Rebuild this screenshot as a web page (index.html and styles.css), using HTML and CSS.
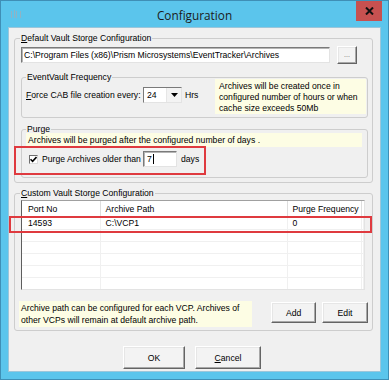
FILE: index.html
```html
<!DOCTYPE html>
<html lang="en">
<head>
    <meta charset="UTF-8">
    <meta name="viewport" content="width=device-width, initial-scale=1.0">
    <title>Configuration</title>
    <link rel="stylesheet" href="styles.css">
</head>
<body>

<div class="window">
    <!-- Barra de título -->
    <div class="titlebar">
        <svg class="app-icon" width="12" height="9" viewBox="0 0 12 9">
            <path d="M1.5 1v7M4.5 0v8M6.5 1v7M10.5 1v7" stroke="#8fb3c4" stroke-width="1"/>
        </svg>
        <div class="title">Configuration</div>
        <div class="close-btn">
            <svg width="9" height="8" viewBox="0 0 9 8">
                <path d="M1 0.5L8 7.5M8 0.5L1 7.5" stroke="#111" stroke-width="2"/>
            </svg>
        </div>
    </div>

    <div class="client">
        <!-- Configuración por defecto -->
        <div class="group vault-group">
            <div class="group-title"><u>D</u>efault Vault Storge Configuration</div>
            <div class="path-row">
                <div class="textbox path-box">C:\Program Files (x86)\Prism Microsystems\EventTracker\Archives</div>
                <button class="btn browse-btn">...</button>
            </div>

            <div class="group freq-group">
                <div class="group-title">EventVault Frequency</div>
                <div class="freq-row">
                    <div class="freq-label"><u>F</u>orce CAB file creation every:</div>
                    <div class="combo">
                        <span class="combo-value">24</span>
                        <span class="combo-arrow">
                            <svg width="7" height="4" viewBox="0 0 7 4"><path d="M0 0h7L3.5 4z" fill="#000"/></svg>
                        </span>
                    </div>
                    <div class="hrs">Hrs</div>
                    <div class="note freq-note">Archives will be created once in<br>configured number of hours or when<br>cache size exceeds 50Mb</div>
                </div>
            </div>

            <div class="group purge-group">
                <div class="group-title">Purge</div>
                <div class="note purge-note">Archives will be purged after the configured number of days .</div>
                <div class="purge-row">
                    <span class="check">
                        <svg width="7" height="7" viewBox="0 0 7 7"><path d="M0.5 3.2L2.6 5.3L6.5 1" fill="none" stroke="#000" stroke-width="1.6"/></svg>
                    </span>
                    <span class="purge-label">Purge Archives older than</span>
                    <div class="textbox days-box">7<span class="caret"></span></div>
                    <span class="days-label">days</span>
                    <div class="highlight purge-highlight"></div>
                </div>
            </div>
        </div>

        <!-- Configuración personalizada -->
        <div class="group custom-group">
            <div class="group-title"><u>C</u>ustom Vault Storge Configuration</div>
            <div class="listview">
                <table class="grid">
                    <colgroup>
                        <col class="col-port">
                        <col class="col-path">
                        <col class="col-freq">
                        <col>
                    </colgroup>
                    <thead>
                        <tr><th>Port No</th><th>Archive Path</th><th>Purge Frequency</th><th></th></tr>
                    </thead>
                    <tbody>
                        <tr><td>14593</td><td>C:\VCP1</td><td>0</td><td></td></tr>
                        <tr><td></td><td></td><td></td><td></td></tr>
                        <tr><td></td><td></td><td></td><td></td></tr>
                        <tr><td></td><td></td><td></td><td></td></tr>
                        <tr><td></td><td></td><td></td><td></td></tr>
                        <tr><td></td><td></td><td></td><td></td></tr>
                    </tbody>
                </table>
            </div>
            <div class="custom-foot">
                <div class="note foot-note">Archive path can be configured for each VCP. Archives of<br>other VCPs will remain at default archive path.</div>
                <button class="btn add-btn">Add</button>
                <button class="btn edit-btn">Edit</button>
            </div>
            <div class="highlight row-highlight"></div>
        </div>

        <!-- Botones del diálogo -->
        <div class="dialog-buttons">
            <button class="btn ok-btn">OK</button>
            <button class="btn cancel-btn"><u>C</u>ancel</button>
        </div>
    </div>
</div>

</body>
</html>
```

FILE: styles.css
```css
body {
    margin: 0;
    font-family: "Liberation Sans", Arial, sans-serif;
    font-size: 8.65px;
    color: #000;
    background-color: #fff;
}
.window {
    width: 389px;
    height: 380px;
    box-sizing: border-box;
    background-color: #5bc5ec;
    border: 1px solid #3f8fb6;
}
/* Barra de título */
.titlebar {
    height: 26px;
    display: grid;
    grid-template-columns: 1fr auto 1fr;
    align-items: start;
}
.app-icon {
    margin: 9px 0 0 9px;
}
.title {
    font-family: "Open Sans", sans-serif;
    font-size: 11.8px;
    line-height: 28px;
    color: #1b1b1b;
}
.close-btn {
    justify-self: end;
    width: 26px;
    height: 20px;
    margin-right: 6px;
    background-color: #c75150;
    display: flex;
    align-items: center;
    justify-content: center;
}
.client {
    width: 373px;
    height: 345px;
    box-sizing: border-box;
    margin-left: 7px;
    background-color: #f0f0f0;
    border: 1px solid #9cc6da;
}
/* Group boxes */
.group {
    box-sizing: border-box;
    border: 1px solid #cdcdcd;
    border-radius: 3px;
}
.group-title {
    display: table;
    height: 11px;
    line-height: 11px;
    margin-top: -6px;
    padding: 0 1px;
    background-color: #f0f0f0;
}
.vault-group {
    width: 359px;
    margin: 10px 0 0 5px;
    padding: 0 4px 4px 6px;
}
.vault-group > .group-title {
    margin-left: -1px;
}
.path-row {
    display: flex;
    align-items: center;
    gap: 7px;
    height: 18px;
    margin-top: 2px;
}
.textbox {
    box-sizing: border-box;
    background-color: #fff;
    border: 1px solid;
    border-color: #7a7a7a #e3e3e3 #e3e3e3 #7a7a7a;
    box-shadow: inset 1px 1px #b5b5b5;
}
.path-box {
    width: 309px;
    height: 16px;
    line-height: 14px;
    padding-left: 2px;
    white-space: nowrap;
}
.btn {
    box-sizing: border-box;
    font: inherit;
    color: #000;
    padding: 0;
    background-color: #f3f3f3;
    border: 1px solid;
    border-color: #fff #646464 #646464 #fff;
    box-shadow: inset -1px -1px #a8a8a8, inset 1px 1px #e6e6e6;
}
.browse-btn {
    width: 20px;
    height: 18px;
    color: #666;
    font-size: 7px;
    line-height: 12px;
}
.freq-group {
    width: 347px;
    margin-top: 13px;
    padding: 0 0 3px 4px;
}
.freq-row {
    display: flex;
    align-items: flex-start;
    margin-top: -4px;
}
.freq-label {
    width: 117px;
    margin-top: 8px;
    line-height: 16px;
}
.combo {
    width: 39px;
    height: 16px;
    margin-top: 8px;
    box-sizing: border-box;
    display: flex;
    background-color: #fff;
    border: 1px solid;
    border-color: #7a7a7a #e3e3e3 #e3e3e3 #7a7a7a;
}
.combo-value {
    flex: 1;
    line-height: 14px;
    padding-left: 3px;
}
.combo-arrow {
    width: 14px;
    display: flex;
    align-items: center;
    justify-content: center;
    background-color: #f3f3f3;
    border-left: 1px solid #e6e6e6;
}
.hrs {
    width: 30px;
    margin: 8px 0 0 3px;
    line-height: 16px;
}
.note {
    box-sizing: border-box;
    background-color: #fdfde4;
}
.freq-note {
    width: 151px;
    height: 35px;
    padding: 2px 0 0 4px;
    line-height: 11px;
}
.purge-group {
    width: 347px;
    margin-top: 11px;
    padding: 0 0 10px 4px;
}
.purge-note {
    width: 336px;
    height: 14px;
    margin-top: -2px;
    padding-left: 2px;
    line-height: 14px;
}
.purge-row {
    position: relative;
    display: flex;
    align-items: center;
    height: 16px;
    margin-top: 4px;
}
.check {
    box-sizing: border-box;
    width: 9px;
    height: 9px;
    margin-left: 3px;
    display: flex;
    align-items: center;
    justify-content: center;
    background-color: #fff;
    border: 1px solid;
    border-color: #6e6e6e #dcdcdc #dcdcdc #6e6e6e;
}
.purge-label {
    width: 101px;
    margin-left: 4px;
}
.days-box {
    width: 34px;
    height: 16px;
    line-height: 14px;
    padding-left: 3px;
    display: flex;
    align-items: center;
}
.caret {
    width: 1px;
    height: 10px;
    margin-left: 1px;
    background-color: #000;
}
.days-label {
    margin-left: 4px;
}
/* Marcas rojas sobre el contenido */
.highlight {
    position: absolute;
    box-sizing: border-box;
    border: 2px solid #df3a3f;
}
.purge-highlight {
    left: -12px;
    top: -5px;
    width: 192px;
    height: 29px;
}
.custom-group {
    position: relative;
    width: 359px;
    margin: 10px 0 0 5px;
    padding: 0 4px 3px 4px;
}
.custom-group > .group-title {
    margin-left: 1px;
}
.row-highlight {
    left: -6px;
    top: 22px;
    width: 363px;
    height: 17px;
}
.listview {
    box-sizing: border-box;
    width: 344px;
    height: 90px;
    margin: 1px 0 0 2px;
    overflow: hidden;
    background-color: #fff;
    border: 1px solid;
    border-color: #a0a0a0 #e3e3e3 #e3e3e3 #5e5e5e;
}
.grid {
    width: 342px;
    border-collapse: collapse;
    table-layout: fixed;
}
.col-port {
    width: 78px;
}
.col-path {
    width: 187px;
}
.col-freq {
    width: 74px;
}
.grid th {
    height: 16px;
    padding: 0 0 0 5px;
    text-align: left;
    font-weight: normal;
    white-space: nowrap;
    border-right: 1px solid #dedede;
    border-bottom: 1px solid #f2f2f2;
}
.grid th:last-child {
    border-right: none;
}
.grid td {
    height: 11px;
    padding: 0 0 0 5px;
    line-height: 11px;
    white-space: nowrap;
    border-right: 1px solid #f0f0f0;
    border-bottom: 1px solid #f0f0f0;
}
.grid th:first-child,
.grid td:first-child {
    padding-left: 6px;
}
.custom-foot {
    display: flex;
    align-items: flex-start;
    margin-top: 11px;
}
.foot-note {
    width: 234px;
    height: 26px;
    padding: 1px 0 0 2px;
    line-height: 12px;
}
.add-btn {
    width: 45px;
    height: 21px;
    margin: 1px 0 0 19px;
}
.edit-btn {
    width: 46px;
    height: 21px;
    margin: 1px 0 0 6px;
}
.dialog-buttons {
    display: flex;
    gap: 10px;
    margin-top: 15px;
    padding-left: 114px;
}
.ok-btn {
    width: 62px;
    height: 23px;
}
.cancel-btn {
    width: 66px;
    height: 23px;
}
```
